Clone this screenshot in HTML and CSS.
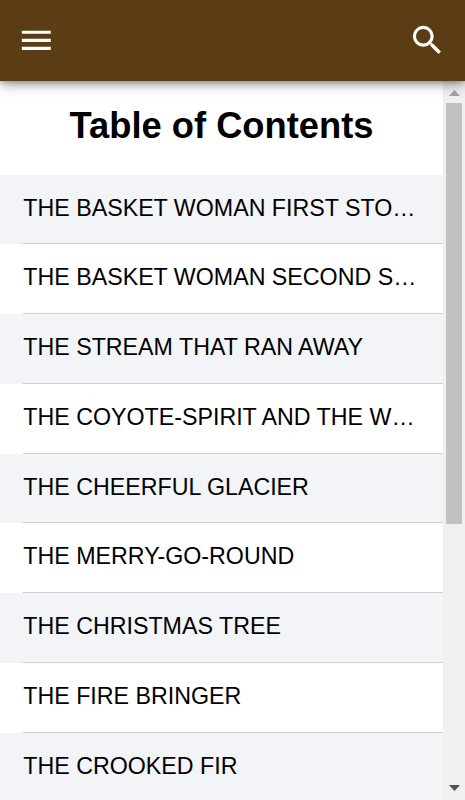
FILE: index.html
```html
<!DOCTYPE html>
<html lang="en">
<head>
  <meta charset="UTF-8">
  <title>Table of Contents</title>
  <link rel="stylesheet" href="styles.css">
</head>
<body>
  <header class="toolbar">
    <button class="icon-button" aria-label="Menu">
      <svg viewBox="0 0 24 24"><path d="M3 18h18v-2H3v2zm0-5h18v-2H3v2zm0-7v2h18V6H3z"/></svg>
    </button>
    <button class="icon-button" aria-label="Search">
      <svg viewBox="0 0 24 24"><path d="M15.5 14h-.79l-.28-.27A6.471 6.471 0 0 0 16 9.500 6.500 6.500 0 1 0 9.500 16c1.610 0 3.090-.590 4.230-1.570l.27.28v.79l5 4.990L20.490 19l-4.990-5zm-6 0C7.010 14 5 11.990 5 9.500S7.010 5 9.500 5 14 7.010 14 9.500 11.990 14 9.500 14z"/></svg>
    </button>
  </header>

  <div class="page">
    <main class="content">
      <h1>Table of Contents</h1>
      <ul class="toc">
        <li><a>THE BASKET WOMAN FIRST STORY</a></li>
        <li><a>THE BASKET WOMAN SECOND STORY</a></li>
        <li><a>THE STREAM THAT RAN AWAY</a></li>
        <li><a>THE COYOTE-SPIRIT AND THE WEAVING WOMAN</a></li>
        <li><a>THE CHEERFUL GLACIER</a></li>
        <li><a>THE MERRY-GO-ROUND</a></li>
        <li><a>THE CHRISTMAS TREE</a></li>
        <li><a>THE FIRE BRINGER</a></li>
        <li><a>THE CROOKED FIR</a></li>
      </ul>
    </main>
    <div class="scrollbar">
      <svg class="arrow up" viewBox="0 0 11 6"><path d="M0 6 5.500 0 11 6z"/></svg>
      <div class="thumb"></div>
      <svg class="arrow down" viewBox="0 0 11 6"><path d="M0 0h11L5.500 6z"/></svg>
    </div>
  </div>
</body>
</html>
```

FILE: styles.css
```css
* {
  box-sizing: border-box;
}
body {
  margin: 0;
  height: 100vh;
  display: flex;
  flex-direction: column;
  overflow: hidden;
  background: #fff;
  color: #000;
  font-family: "Liberation Sans", Arial, sans-serif;
}
.toolbar {
  flex: none;
  position: relative;
  z-index: 1;
  display: flex;
  align-items: center;
  justify-content: space-between;
  height: 81px;
  padding: 0 18.4px 0 17.2px;
  background: #5a3c15;
  box-shadow: 0 2px 12px rgba(0, 0, 0, 0.5), 0 1px 4px rgba(0, 0, 0, 0.15);
}
.icon-button {
  width: 38.6px;
  height: 38.6px;
  padding: 0;
  border: none;
  background: none;
}
.icon-button svg {
  display: block;
  width: 100%;
  fill: #fff;
}
.page {
  flex: 1;
  display: flex;
  min-height: 0;
}
.content {
  flex: 1;
  min-width: 0;
  overflow: hidden;
}
h1 {
  margin: 0;
  height: 93.6px;
  line-height: 89px;
  font-size: 36.3px;
  text-align: center;
}
.toc {
  margin: 0;
  padding: 0;
  list-style: none;
}
.toc li {
  height: 69.77px;
  padding-left: 23.3px;
}
.toc li:nth-child(odd) {
  background: #f3f4f8;
}
.toc a {
  display: block;
  height: 100%;
  padding-right: 23.3px;
  border-bottom: 1px solid #cdced0;
  font-size: 23.22px;
  line-height: 66.6px;
  white-space: nowrap;
  overflow: hidden;
  text-overflow: ellipsis;
}
.scrollbar {
  flex: none;
  display: flex;
  flex-direction: column;
  align-items: center;
  width: 22px;
  padding: 9px 0;
  background: #f0f0f0;
}
.arrow {
  width: 11px;
  height: 6px;
}
.up {
  fill: #a3a3a3;
}
.down {
  margin-top: auto;
  fill: #505050;
}
.thumb {
  width: 16px;
  height: 420.5px;
  margin-top: 7px;
  background: #c1c1c1;
}
```
